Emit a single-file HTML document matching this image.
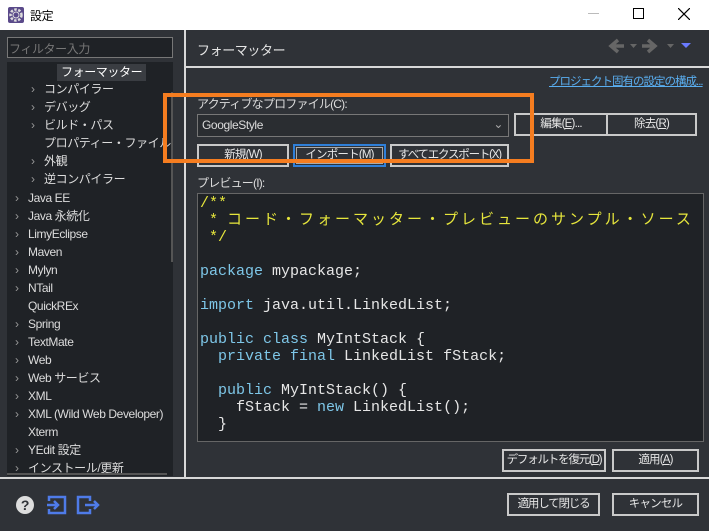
<!DOCTYPE html>
<html><head><meta charset="utf-8"><style>
*{margin:0;padding:0;box-sizing:border-box}
body{width:709px;height:531px;background:#2f3237;font-family:"Liberation Sans","Noto Sans CJK JP",sans-serif;font-size:12px;color:#dcdcdc;position:relative;overflow:hidden;letter-spacing:-0.4px}
.a{position:absolute;white-space:nowrap}
.title{left:0;top:0;width:709px;height:30px;background:#fff;color:#000}
.tree{left:7px;top:62px;width:166px;height:414px;background:#1f2226;overflow:hidden}
.ti{position:absolute;font-size:12px;color:#dcdcdc;white-space:nowrap;line-height:15px}
.ar{position:absolute;color:#999;font-size:12px;line-height:15px}
.btn{position:absolute;border:2px solid #c9c9c9;background:#2f3237;color:#e6e6e6;text-align:center;font-size:11.5px;line-height:19px;height:23px;white-space:nowrap;overflow:hidden;letter-spacing:-0.8px}
.code{left:197px;top:193px;width:507px;height:249px;background:#1f2226;border:1px solid #666;font-family:"Liberation Mono","Noto Sans CJK JP",monospace;font-size:15px;line-height:17px;color:#e6e6e6;padding:1px 0 0 2px;white-space:pre;letter-spacing:0;overflow:hidden}
.k{color:#7ec7e8}.c{color:#e6e63c}
.j{letter-spacing:3px}
</style></head><body>
<div class="a title">
 <svg style="position:absolute;left:8px;top:7px" width="16" height="16" viewBox="0 0 16 16"><rect width="16" height="16" rx="2" fill="#5a4a8a"/><circle cx="8" cy="8" r="5.5" fill="none" stroke="#ddd" stroke-width="2.5" stroke-dasharray="2.5 1.5"/><circle cx="8" cy="8" r="3" fill="#5a4a8a" stroke="#ddd"/></svg>
 <span class="a" style="left:30px;top:7px;font-size:12px">設定</span>
 <span class="a" style="left:588px;top:13px;width:11px;height:1px;background:#bbb"></span>
 <span class="a" style="left:633px;top:8px;width:11px;height:11px;border:1px solid #000"></span>
 <svg class="a" style="left:678px;top:8px" width="12" height="12" viewBox="0 0 12 12" stroke="#000" stroke-width="1.2"><path d="M0 0L12 12M12 0L0 12"/></svg>
</div>
<div class="a" style="left:7px;top:37px;width:166px;height:21px;border:1px solid #777;background:#1f2226;color:#777;font-size:12px;padding:2px 1px">フィルター入力</div>
<div class="a tree">
 <span class="ti" style="left:50px;top:2px;background:#3a3d42;padding:1px 4px;color:#fff">フォーマッター</span>
 <span class="ar" style="left:24px;top:20px">›</span><span class="ti" style="left:37px;top:20px">コンパイラー</span>
 <span class="ar" style="left:24px;top:38px">›</span><span class="ti" style="left:37px;top:38px">デバッグ</span>
 <span class="ar" style="left:24px;top:56px">›</span><span class="ti" style="left:37px;top:56px">ビルド・パス</span>
 <span class="ti" style="left:37px;top:74px">プロパティー・ファイル・エディ</span>
 <span class="ar" style="left:24px;top:92px">›</span><span class="ti" style="left:37px;top:92px">外観</span>
 <span class="ar" style="left:24px;top:110px">›</span><span class="ti" style="left:37px;top:110px">逆コンパイラー</span>
 <span class="ar" style="left:8px;top:129px">›</span><span class="ti" style="left:21px;top:129px">Java EE</span>
 <span class="ar" style="left:8px;top:147px">›</span><span class="ti" style="left:21px;top:147px">Java 永続化</span>
 <span class="ar" style="left:8px;top:165px">›</span><span class="ti" style="left:21px;top:165px">LimyEclipse</span>
 <span class="ar" style="left:8px;top:183px">›</span><span class="ti" style="left:21px;top:183px">Maven</span>
 <span class="ar" style="left:8px;top:201px">›</span><span class="ti" style="left:21px;top:201px">Mylyn</span>
 <span class="ar" style="left:8px;top:219px">›</span><span class="ti" style="left:21px;top:219px">NTail</span>
 <span class="ti" style="left:21px;top:237px">QuickREx</span>
 <span class="ar" style="left:8px;top:255px">›</span><span class="ti" style="left:21px;top:255px">Spring</span>
 <span class="ar" style="left:8px;top:273px">›</span><span class="ti" style="left:21px;top:273px">TextMate</span>
 <span class="ar" style="left:8px;top:291px">›</span><span class="ti" style="left:21px;top:291px">Web</span>
 <span class="ar" style="left:8px;top:309px">›</span><span class="ti" style="left:21px;top:309px">Web サービス</span>
 <span class="ar" style="left:8px;top:327px">›</span><span class="ti" style="left:21px;top:327px">XML</span>
 <span class="ar" style="left:8px;top:345px">›</span><span class="ti" style="left:21px;top:345px">XML (Wild Web Developer)</span>
 <span class="ti" style="left:21px;top:363px">Xterm</span>
 <span class="ar" style="left:8px;top:381px">›</span><span class="ti" style="left:21px;top:381px">YEdit 設定</span>
 <span class="ar" style="left:8px;top:399px">›</span><span class="ti" style="left:21px;top:399px">インストール/更新</span>
 <span class="a" style="left:164px;top:30px;width:2px;height:170px;background:#555"></span>
 <span class="a" style="left:0;top:411px;width:160px;height:2px;background:#555"></span>
</div>
<div class="a" style="left:184px;top:30px;width:2px;height:448px;background:#d8d8d8"></div>
<div class="a" style="left:186px;top:66px;width:523px;height:2px;background:#d8d8d8"></div>
<div class="a" style="left:0;top:477px;width:709px;height:2px;background:#d8d8d8"></div>
<span class="a" style="left:197px;top:40px;font-size:13px;color:#e6e6e6">フォーマッター</span>
<svg class="a" style="left:608px;top:38px" width="90" height="16" viewBox="0 0 90 16"><path d="M10 2L3 8l7 6M3 8h13" stroke="#666" stroke-width="3.5" fill="none"/><path d="M22 6h7l-3.5 4z" fill="#666"/><path d="M40 2l7 6-7 6M47 8H34" stroke="#666" stroke-width="3.5" fill="none"/><path d="M59 6h7l-3.5 4z" fill="#666"/><path d="M73 5h10l-5 5z" fill="#6a7bff"/></svg>
<span class="a" style="left:549px;top:73px;color:#5aaef0;text-decoration:underline;letter-spacing:-1px;font-size:11.5px">プロジェクト固有の設定の構成...</span>
<span class="a" style="left:197px;top:95px;letter-spacing:-0.8px">アクティブなプロファイル(C):</span>
<div class="a" style="left:197px;top:114px;width:312px;height:23px;border:1px solid #777;background:#2a2d31;padding:3px 4px">GoogleStyle<span class="a" style="right:5px;top:2px;color:#aaa">⌄</span></div>
<div class="btn" style="left:514px;top:113px;width:94px">編集(<u>E</u>)...</div>
<div class="btn" style="left:606px;top:113px;width:91px">除去(<u>R</u>)</div>
<div class="btn" style="left:197px;top:144px;width:92px">新規(W)</div>
<div class="btn" style="left:293px;top:144px;width:93px;border-color:#2f7fd8;outline:1px solid #aaa;outline-offset:-4px">インポート(M)</div>
<div class="btn" style="left:390px;top:144px;width:119px;letter-spacing:-1.2px">すべてエクスポート(X)</div>
<div class="a" style="left:163px;top:93px;width:371px;height:70px;border:4px solid #f57d20"></div>
<span class="a" style="left:197px;top:174px;letter-spacing:-0.8px">プレビュー(I):</span>
<div class="a code"><span class="c">/**
 * <span class="j">コード・フォーマッター・プレビューのサンプル・ソース</span>
 */</span>

<span class="k">package</span> mypackage;

<span class="k">import</span> java.util.LinkedList;

<span class="k">public class</span> MyIntStack {
  <span class="k">private final</span> LinkedList fStack;

  <span class="k">public</span> MyIntStack() {
    fStack = <span class="k">new</span> LinkedList();
  }</div>
<div class="btn" style="left:502px;top:449px;width:104px;letter-spacing:-1.2px">デフォルトを復元(<u>D</u>)</div>
<div class="btn" style="left:612px;top:449px;width:87px">適用(<u>A</u>)</div>
<svg class="a" style="left:15px;top:495px" width="20" height="20" viewBox="0 0 20 20"><circle cx="10" cy="10" r="9" fill="#ddd"/><text x="10" y="15" text-anchor="middle" font-family="Liberation Sans" font-weight="bold" font-size="14" fill="#2f3237">?</text></svg>
<svg class="a" style="left:46px;top:494px" width="22" height="22" viewBox="0 0 22 22" fill="none" stroke="#4f7be8" stroke-width="2.5"><path d="M3 7V3h16v16H3v-4"/><path d="M1 11h11M8 7l4 4-4 4"/></svg>
<svg class="a" style="left:76px;top:494px" width="24" height="22" viewBox="0 0 24 22" fill="none" stroke="#4f7be8" stroke-width="2.5"><path d="M14 7V3H2v16h12v-4"/><path d="M9 11h13M18 7l4 4-4 4"/></svg>
<div class="btn" style="left:507px;top:493px;width:93px;letter-spacing:-1.2px">適用して閉じる</div>
<div class="btn" style="left:612px;top:493px;width:87px">キャンセル</div>
</body></html>
